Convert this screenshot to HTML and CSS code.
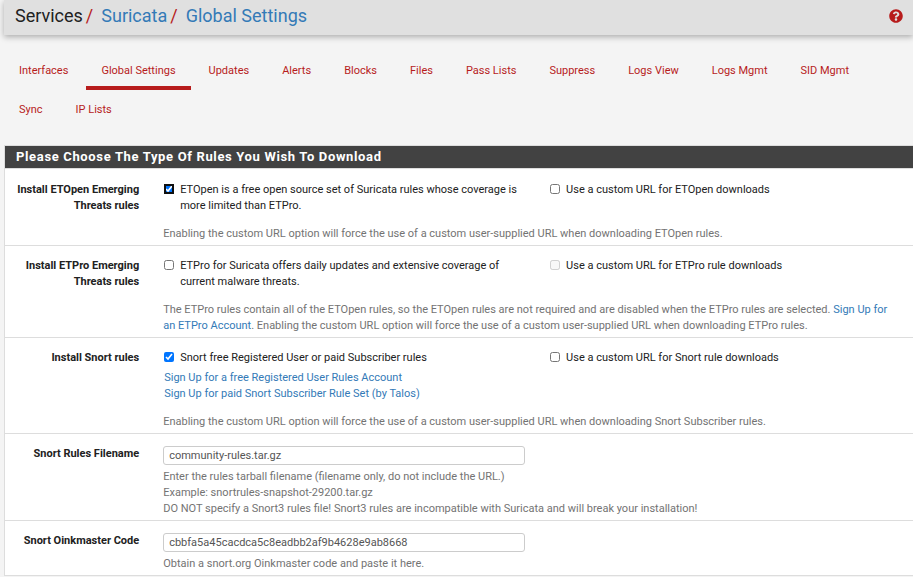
FILE: index.html
```html
<!DOCTYPE html>
<html lang="en">
<head>
<meta charset="utf-8">
<meta name="viewport" content="width=device-width, initial-scale=1">
<title>Services: Suricata: Global Settings</title>
<link rel="stylesheet" href="styles.css">
</head>
<body>
<header class="page-header">
  <nav class="breadcrumb" aria-label="Breadcrumb">
    <span>Services</span><span class="slash">/</span><a href="#">Suricata</a><span class="slash">/</span><a href="#">Global Settings</a>
  </nav>
  <a class="help-link" href="#" aria-label="Help">
    <svg viewBox="0 0 512 512" aria-hidden="true"><path fill="currentColor" d="M504 256c0 137-111 248-248 248S8 393 8 256 119 8 256 8s248 111 248 248zM262.700 90c-54.500 0-89.300 23-116.500 63.800-3.500 5.300-2.400 12.400 2.700 16.300l34.700 26.300c5.200 3.900 12.600 3 16.700-2.100 17.900-22.700 30.100-35.800 57.300-35.800 20.400 0 45.700 13.100 45.700 33 0 15-12.400 22.700-32.500 34C247.100 238.500 216 254.900 216 296v4c0 6.600 5.400 12 12 12h56c6.600 0 12-5.400 12-12v-1.300c0-28.500 83.200-29.600 83.200-106.700 0-58-60.200-102-116.500-102zM256 338c-25.400 0-46 20.600-46 46s20.600 46 46 46 46-20.600 46-46-20.600-46-46-46z"/></svg>
  </a>
</header>

<nav class="tabs" aria-label="Suricata sections">
  <a href="#">Interfaces</a>
  <a href="#" class="active" aria-current="page">Global Settings</a>
  <a href="#">Updates</a>
  <a href="#">Alerts</a>
  <a href="#">Blocks</a>
  <a href="#">Files</a>
  <a href="#">Pass Lists</a>
  <a href="#">Suppress</a>
  <a href="#">Logs View</a>
  <a href="#">Logs Mgmt</a>
  <a href="#">SID Mgmt</a>
  <a href="#">Sync</a>
  <a href="#">IP Lists</a>
</nav>

<form class="panel">
  <h2 class="panel-title">Please Choose The Type Of Rules You Wish To Download</h2>

  <div class="row">
    <div class="row-label">Install ETOpen Emerging Threats rules</div>
    <div class="field">
      <label class="check"><input class="focused" type="checkbox" checked><span>ETOpen is a free open source set of Suricata rules whose coverage is more limited than ETPro.</span></label>
    </div>
    <div class="field">
      <label class="check"><input type="checkbox"><span>Use a custom URL for ETOpen downloads</span></label>
    </div>
    <p class="help spaced">Enabling the custom URL option will force the use of a custom user-supplied URL when downloading ETOpen rules.</p>
  </div>

  <div class="row">
    <div class="row-label">Install ETPro Emerging Threats rules</div>
    <div class="field">
      <label class="check"><input type="checkbox"><span>ETPro for Suricata offers daily updates and extensive coverage of current malware threats.</span></label>
    </div>
    <div class="field">
      <label class="check"><input type="checkbox" disabled><span>Use a custom URL for ETPro rule downloads</span></label>
    </div>
    <p class="help spaced">The ETPro rules contain all of the ETOpen rules, so the ETOpen rules are not required and are disabled when the ETPro rules are selected. <a href="#">Sign Up for an ETPro Account</a>. Enabling the custom URL option will force the use of a custom user-supplied URL when downloading ETPro rules.</p>
  </div>

  <div class="row">
    <div class="row-label">Install Snort rules</div>
    <div class="field">
      <label class="check"><input type="checkbox" checked><span>Snort free Registered User or paid Subscriber rules</span></label>
      <div class="signup">
        <a href="#">Sign Up for a free Registered User Rules Account</a>
        <a href="#">Sign Up for paid Snort Subscriber Rule Set (by Talos)</a>
      </div>
    </div>
    <div class="field">
      <label class="check"><input type="checkbox"><span>Use a custom URL for Snort rule downloads</span></label>
    </div>
    <p class="help spaced">Enabling the custom URL option will force the use of a custom user-supplied URL when downloading Snort Subscriber rules.</p>
  </div>

  <div class="row">
    <label class="row-label" for="filename">Snort Rules Filename</label>
    <div class="field"><input class="text-input" id="filename" type="text" value="community-rules.tar.gz"></div>
    <p class="help">Enter the rules tarball filename (filename only, do not include the URL.)<br>Example: snortrules-snapshot-29200.tar.gz<br>DO NOT specify a Snort3 rules file! Snort3 rules are incompatible with Suricata and will break your installation!</p>
  </div>

  <div class="row">
    <label class="row-label" for="oinkcode">Snort Oinkmaster Code</label>
    <div class="field"><input class="text-input" id="oinkcode" type="text" value="cbbfa5a45cacdca5c8eadbb2af9b4628e9ab8668"></div>
    <p class="help">Obtain a snort.org Oinkmaster code and paste it here.</p>
  </div>
</form>
</body>
</html>
```
FILE: styles.css
```css
* {
  box-sizing: border-box;
}

body {
  margin: 0;
  background: #f4f4f4;
  color: #212121;
  font: 11px/16px Roboto, "Liberation Sans", sans-serif;
}

a {
  color: #337ab7;
  text-decoration: none;
}

.page-header {
  display: flex;
  align-items: center;
  justify-content: space-between;
  height: 35px;
  margin-left: 4px;
  padding: 0 10px 4px 11px;
  background: #e0e0e0;
  box-shadow: 0 2px 6px rgba(0, 0, 0, 0.3);
}

.breadcrumb {
  color: #212121;
  font-size: 18px;
  line-height: 24px;
}

.slash {
  margin: 0 8px 0 3px;
  color: #b71c1c;
}

.help-link {
  display: flex;
  color: #b71c1c;
}

.help-link svg {
  width: 14px;
  height: 14px;
}

.tabs {
  display: flex;
  flex-wrap: wrap;
  column-gap: 3px;
  padding: 16px 40px 16px 4px;
}

.tabs a {
  padding: 12px 15px 7px;
  border-bottom: 4px solid transparent;
  color: #b71c1c;
}

.tabs .active {
  border-color: #b71c1c;
}

.panel {
  margin-left: 4px;
  border: solid #ddd;
  border-width: 1px 0 0 1px;
  background: #fff;
}

.panel-title {
  margin: 0 0 1px;
  padding: 0 11px;
  border-bottom: 1px solid #ddd;
  background: #424242;
  color: #fff;
  font-size: 13px;
  font-weight: 700;
  line-height: 22px;
  letter-spacing: 0.05em;
}

.row {
  display: grid;
  grid-template-columns: 16.1% 42.5% 1fr;
  padding: 12px 0 3px;
  border-bottom: 1px solid #ddd;
}

.row-label {
  padding: 0 12px 0 8px;
  font-weight: 700;
  text-align: right;
}

.field {
  padding: 0 12px;
}

.check {
  display: flex;
  align-items: flex-start;
  gap: 6px;
}

.check input {
  flex: none;
  width: 10px;
  height: 10px;
  margin: 2px 0 0 1px;
}

.check .focused {
  outline: 2px solid #101010;
  outline-offset: -2px;
  border-radius: 2px;
}

.signup {
  display: flex;
  flex-direction: column;
  align-items: flex-start;
  padding: 4px 0 0 1px;
}

.text-input {
  display: block;
  width: 100%;
  height: 19px;
  padding: 0 5px;
  border: 1px solid #ccc;
  border-radius: 3px;
  background: #fff;
  color: #555;
  font: inherit;
}

.help {
  grid-column: 2 / -1;
  margin: 4px 0 0;
  padding: 0 12px;
  color: #737373;
}

.spaced {
  margin-top: 12px;
}
```
